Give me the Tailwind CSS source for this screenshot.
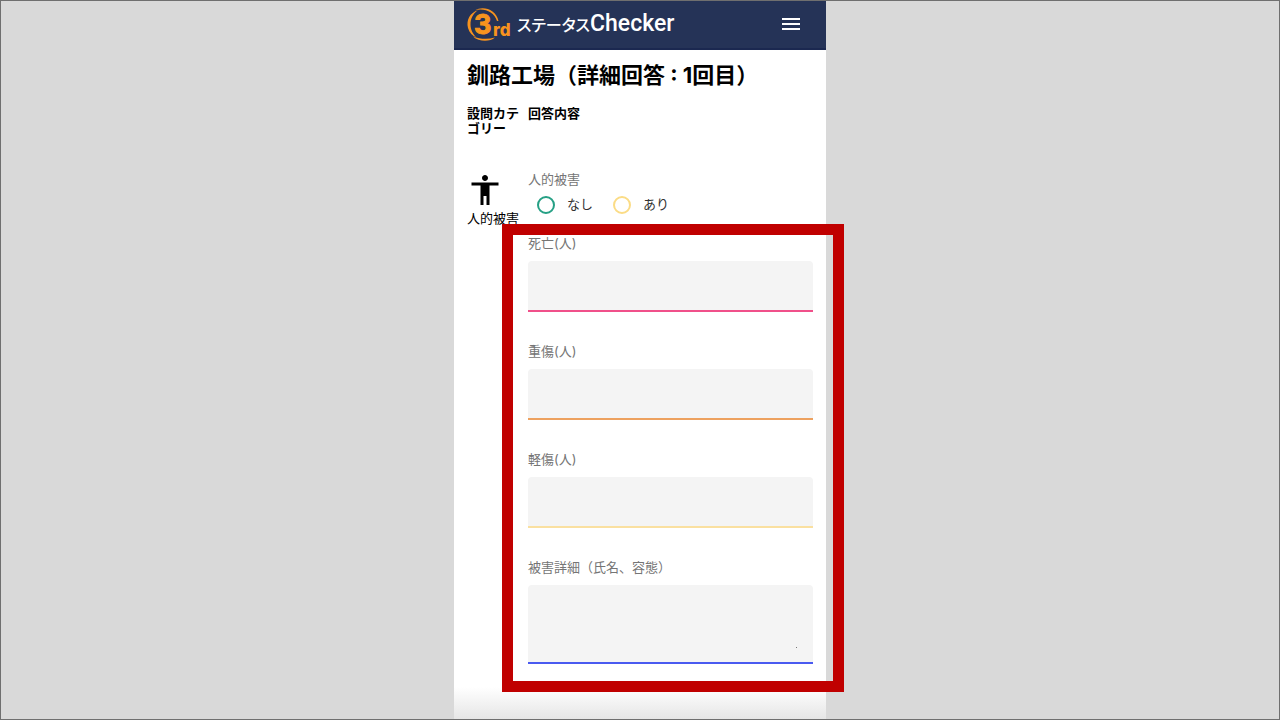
<!DOCTYPE html>
<html lang="ja">

<head>
    <meta charset="UTF-8">
    <meta name="viewport" content="width=device-width, initial-scale=1.0">
    <title>3rd ステータスChecker</title>
    <script src="https://cdn.jsdelivr.net/npm/@tailwindcss/browser@4"></script>
</head>

<body class="bg-[#d9d9d9] font-['Inter','Noto_Sans_CJK_JP',sans-serif] text-black">
    <div class="flex min-h-screen justify-center overflow-hidden border border-[#6f6f6f]">
        <div class="flex w-full max-w-[372px] flex-col bg-white">
            <!-- Header -->
            <header class="flex h-[49px] items-center justify-between border-b-2 border-[#1b2850] bg-[#253357] pl-3 pr-[26px]">
                <a href="#" class="flex items-center gap-1 text-white">
                    <svg class="h-9 w-[47px]" viewBox="0 0 47 36" fill="#f7931e" role="img" aria-label="3rd">
                        <path d="M12 3.200C4 5.500 0 13 2 21C3.300 25.500 6.500 29 10.500 30.500C7 27 4.500 23 4.500 17.500C4.500 11.500 7 6.500 12 3.200Z" />
                        <path d="M9 3.200C17 -1.600 30 2 32.500 14L31 14C28 5 19 .8 9 3.200Z" />
                        <path d="M7 29.500C13 35 24 35 29 30.500C22 32.500 14 32.200 7 29.500Z" />
                        <text x="8" y="27" stroke="#f7931e" stroke-width="1" class="font-['Inter'] text-[27px] font-bold">3</text>
                        <text x="27" y="29" class="font-['Inter'] text-[17px] font-extrabold">rd</text>
                    </svg>
                    <span class="flex items-baseline font-['Roboto','Noto_Sans_CJK_JP',sans-serif] font-medium leading-8">
                        <span class="text-[16px] [font-feature-settings:'palt']">ステータス</span>
                        <span class="text-[23px]">Checker</span>
                    </span>
                </a>
                <button type="button" aria-label="メニュー" class="mb-0.5 flex w-[18px] flex-col gap-[3px]">
                    <span class="h-0.5 w-full bg-white"></span>
                    <span class="h-0.5 w-full bg-white"></span>
                    <span class="h-0.5 w-full bg-white"></span>
                </button>
            </header>

            <!-- Form -->
            <main class="px-[13px] pt-[10px]">
                <h1 class="text-[22px] font-bold leading-[30px]">釧路工場（詳細回答 : 1回目）</h1>

                <div class="mt-4 flex text-[13px] font-bold leading-[15px]">
                    <div class="w-[61px] shrink-0 pr-2">設問カテゴリー</div>
                    <div>回答内容</div>
                </div>

                <form class="mt-[33px] flex text-[13px]">
                    <div class="w-[61px] shrink-0 pt-[3px]">
                        <svg class="size-9" viewBox="0 0 24 24" aria-hidden="true">
                            <path d="M12 2c1.100 0 2 .9 2 2s-.9 2-2 2-2-.9-2-2 .9-2 2-2zm9 7h-6v13h-2v-6h-2v6H9V9H3V7h18v2z" />
                        </svg>
                        <p class="mt-[3px] whitespace-nowrap leading-[15px]">人的被害</p>
                    </div>

                    <div class="min-w-0 flex-1">
                        <fieldset>
                            <legend class="block h-[21px] leading-5 text-[#757575]">人的被害</legend>
                            <div class="flex h-[30px] items-center gap-5 pl-[9px] text-[#333333]">
                                <label class="flex items-center gap-3">
                                    <input type="radio" name="damage" class="size-[18px] appearance-none rounded-full border-2 border-[#26a085]">なし
                                </label>
                                <label class="flex items-center gap-3">
                                    <input type="radio" name="damage" class="size-[18px] appearance-none rounded-full border-2 border-[#fbdc86]">あり
                                </label>
                            </div>
                        </fieldset>

                        <div class="relative mt-[13px] flex flex-col gap-[29px] leading-5 text-[#757575]">
                            <div>
                                <label for="dead" class="block">死亡(人)</label>
                                <input id="dead" type="text" class="mt-2 block h-[51px] w-full rounded-t border-b-2 border-[#f0508a] bg-[#f4f4f4] px-4">
                            </div>
                            <div>
                                <label for="serious" class="block">重傷(人)</label>
                                <input id="serious" type="text" class="mt-2 block h-[51px] w-full rounded-t border-b-2 border-[#eda15f] bg-[#f4f4f4] px-4">
                            </div>
                            <div>
                                <label for="minor" class="block">軽傷(人)</label>
                                <input id="minor" type="text" class="mt-2 block h-[51px] w-full rounded-t border-b-2 border-[#fae0a0] bg-[#f4f4f4] px-4">
                            </div>
                            <div class="relative">
                                <label for="detail" class="block">被害詳細（氏名、容態）</label>
                                <textarea id="detail" class="mt-2 block h-[79px] w-full resize-none rounded-t border-b-2 border-[#4a5af0] bg-[#f4f4f4] px-4 py-3"></textarea>
                                <span class="absolute bottom-4 right-4 size-px bg-[#777777]"></span>
                            </div>

                            <!-- Highlight frame -->
                            <div class="pointer-events-none absolute -bottom-7 -left-[26px] -right-[31px] -top-[9px] border-[11px] border-[#c00000]"></div>
                        </div>
                    </div>
                </form>
            </main>

            <div class="mt-auto h-8 bg-linear-to-b from-white to-[#e6e6e6]"></div>
        </div>
    </div>
</body>

</html>
